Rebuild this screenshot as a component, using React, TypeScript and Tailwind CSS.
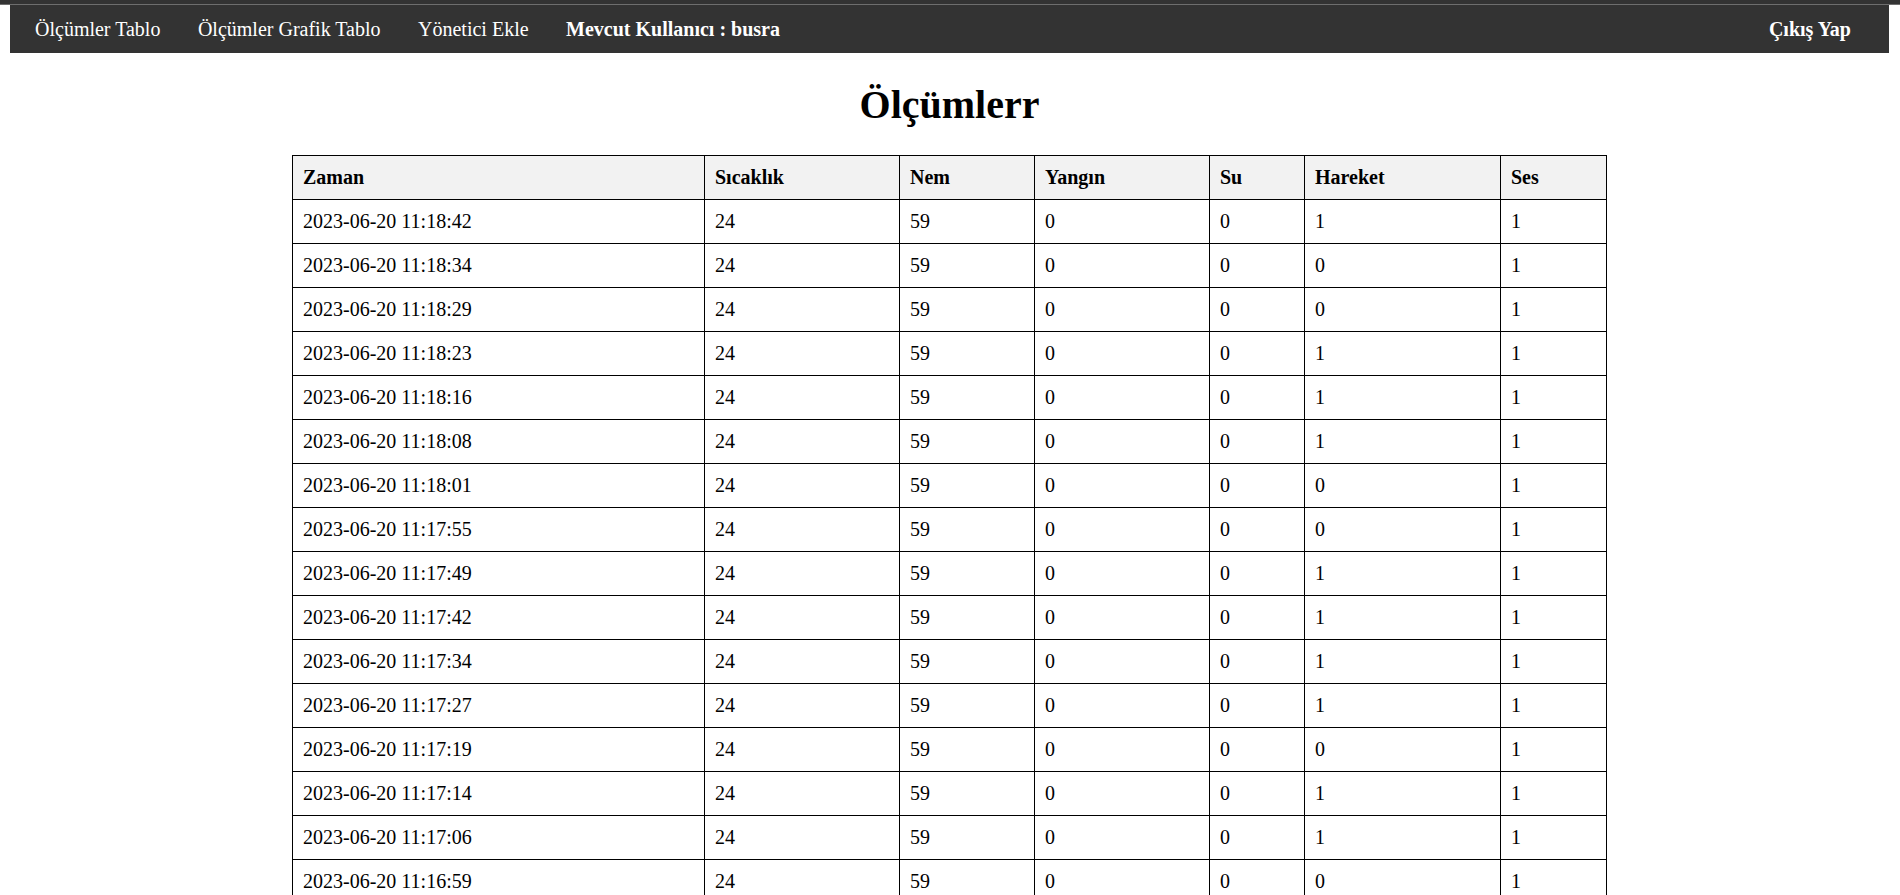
import React from "react";

const times: [string, number][] = [
  ["11:18:42", 1],
  ["11:18:34", 0],
  ["11:18:29", 0],
  ["11:18:23", 1],
  ["11:18:16", 1],
  ["11:18:08", 1],
  ["11:18:01", 0],
  ["11:17:55", 0],
  ["11:17:49", 1],
  ["11:17:42", 1],
  ["11:17:34", 1],
  ["11:17:27", 1],
  ["11:17:19", 0],
  ["11:17:14", 1],
  ["11:17:06", 1],
  ["11:16:59", 0],
  ["11:16:52", 1],
  ["11:16:45", 0],
];

const headers = ["Zaman", "Sıcaklık", "Nem", "Yangın", "Su", "Hareket", "Ses"];
const widths = [412, 195, 135, 175, 95, 196, 106];

export default function App() {
  return (
    <div className="min-h-[895px] bg-white font-['Liberation_Serif',serif] text-black">
      <div className="h-[4px] bg-[#333333]" />
      <div className="h-[1px] bg-[#6e6e6e]" />
      <div className="mx-[10px] w-[1879px]">
        <nav className="flex h-[48px] items-center bg-[#333333] pl-[25px] pr-[38px] text-[20px] leading-[23px] text-white">
          <div className="flex items-center gap-[37.5px]">
            <a className="cursor-pointer">Ölçümler Tablo</a>
            <a className="cursor-pointer">Ölçümler Grafik Tablo</a>
            <a className="cursor-pointer">Yönetici Ekle</a>
            <span className="font-bold">Mevcut Kullanıcı : busra</span>
          </div>
          <a className="ml-auto cursor-pointer font-bold">Çıkış Yap</a>
        </nav>
        <h1 className="mt-[29px] mb-[27px] text-center text-[40px] font-bold leading-[46px]">Ölçümlerr</h1>
        <table className="mx-auto w-[1314px] table-fixed border-collapse text-[20px] leading-[23px]">
          <colgroup>
            {widths.map((w, i) => (
              <col key={i} style={{ width: w }} />
            ))}
          </colgroup>
          <thead>
            <tr className="bg-[#f2f2f2]">
              {headers.map((h) => (
                <th key={h} className="border border-black px-[10px] py-[10px] text-left font-bold">
                  {h}
                </th>
              ))}
            </tr>
          </thead>
          <tbody>
            {times.map(([t, h]) => (
              <tr key={t}>
                <td className="border border-black px-[10px] py-[10px]">2023-06-20 {t}</td>
                <td className="border border-black px-[10px] py-[10px]">24</td>
                <td className="border border-black px-[10px] py-[10px]">59</td>
                <td className="border border-black px-[10px] py-[10px]">0</td>
                <td className="border border-black px-[10px] py-[10px]">0</td>
                <td className="border border-black px-[10px] py-[10px]">{h}</td>
                <td className="border border-black px-[10px] py-[10px]">1</td>
              </tr>
            ))}
          </tbody>
        </table>
      </div>
    </div>
  );
}
